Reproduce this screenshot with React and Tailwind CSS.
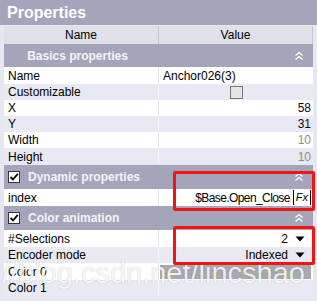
import React from "react";

const Chev = () => (
  <svg width="10" height="10" viewBox="0 0 10 10" className="block">
    <path d="M1.5 4.5 L5 1.5 L8.5 4.5 M1.5 8.5 L5 5.5 L8.5 8.5" fill="none" stroke="#ffffff" strokeWidth="1.3" />
  </svg>
);

const Tri = () => (
  <svg width="10" height="6" viewBox="0 0 10 6" className="block">
    <path d="M0.5 0.5 L9.5 0.5 L5 5.5 Z" fill="#000" />
  </svg>
);

const CheckBox = () => (
  <div className="w-[12px] h-[12px] bg-white border border-[#333] flex items-center justify-center">
    <svg width="10" height="10" viewBox="0 0 10 10" className="block">
      <path d="M1.5 5 L4 7.5 L8.8 1.8" fill="none" stroke="#000" strokeWidth="1.8" />
    </svg>
  </div>
);

function Section({ title, checkbox, h = "h-[24px]" }) {
  return (
    <div className={`flex items-center ${h} bg-[#a4a4ba]`}>
      {checkbox ? (
        <div className="flex items-center pl-[4px] gap-[8px] flex-1">
          <CheckBox />
          <span className="font-bold text-[12px] text-[#f4f4f8]">{title}</span>
        </div>
      ) : (
        <div className="w-[154px] text-center pr-[7px] font-bold text-[12px] text-[#f4f4f8]">{title}</div>
      )}
      <div className="ml-auto mr-[9px]">
        <Chev />
      </div>
    </div>
  );
}

function Row({ name, white, h = "h-[16px]", children, right }) {
  const bg = white ? "bg-white" : "bg-[#e8e9f2]";
  return (
    <div className={`flex ${h}`}>
      <div className={`w-[154px] ${bg} flex items-center pl-[4px] text-[12px] text-black`}>{name}</div>
      <div className={`w-[1px] ${white ? "bg-[#e4e5ee]" : "bg-[#f4f4f9]"}`}></div>
      <div className={`flex-1 ${bg} flex items-center ${right ? "justify-end pr-[2px]" : "pl-[4px]"} text-[12px]`}>
        {children}
      </div>
    </div>
  );
}

export default function App() {
  return (
    <div
      className="relative w-[317px] h-[301px] overflow-hidden bg-[#e6e7f0]"
      style={{ fontFamily: '"Liberation Sans", Arial, sans-serif' }}
    >
      <div className="h-[25px] bg-[#a4a4ba] flex items-center pl-[7px]">
        <span className="text-white font-bold text-[16px] leading-none">Properties</span>
      </div>
      <div className="h-[1px]"></div>
      <div className="pl-[4px] pr-[4px]">
        <div className="flex h-[18px] bg-[#dfe0e8] text-[12px] text-black">
          <div className="w-[154px] flex items-center justify-center">Name</div>
          <div className="w-[1px] bg-[#c4c5d2]"></div>
          <div className="flex-1 flex items-center justify-center">Value</div>
          <div className="w-[1px] bg-[#c4c5d2]"></div>
        </div>
        <Section title="Basics properties" h="h-[23px]" />
        <Row name="Name" white h="h-[17px]">
          <span className="text-black">Anchor026(3)</span>
        </Row>
        <Row name="Customizable">
          <div className="flex-1 flex justify-center pr-[4px]">
            <div className="w-[13px] h-[13px] bg-[#e4e4e8] border border-[#777]"></div>
          </div>
        </Row>
        <Row name="X" white right>
          <span className="text-[#0a0a20]">58</span>
        </Row>
        <Row name="Y" right>
          <span className="text-[#0a0a20]">31</span>
        </Row>
        <Row name="Width" white right>
          <span className="text-[#8e8e8e]">10</span>
        </Row>
        <Row name="Height" h="h-[17px]" right>
          <span className="text-[#8e8e8e]">10</span>
        </Row>
        <Section title="Dynamic properties" checkbox />
        <Row name="index" white h="h-[17px]" right>
          <span className="text-black tracking-[-0.6px]">$Base.Open_Close</span>
          <span className="ml-[3px] h-[15px] border-l border-r border-black px-[2px] flex items-center text-[11px] italic">
            Fx
          </span>
        </Row>
        <Section title="Color animation" checkbox />
        <Row name="#Selections" white h="h-[17px]" right>
          <span className="text-black">2</span>
          <span className="ml-[7px] mr-[6px]"><Tri /></span>
        </Row>
        <Row name="Encoder mode" right>
          <span className="text-black">Indexed</span>
          <span className="ml-[7px] mr-[6px]"><Tri /></span>
        </Row>
        <Row name="Color 0" white h="h-[17px]">
          <div className="w-[151px] h-[14px] -ml-[3px] bg-[#a9a9ac]"></div>
        </Row>
        <Row name="Color 1"></Row>
      </div>

      <div
        className="absolute right-[12px] top-[259px] text-[29px] leading-[29px] whitespace-nowrap text-[rgba(255,255,255,0.88)] [text-shadow:0_0_1px_rgba(0,0,0,0.28)]"
        style={{ fontFamily: '"Liberation Sans", Arial, sans-serif' }}
      >
        https://blog.csdn.net/lincshao
      </div>

      <div className="absolute left-[173px] top-[171px] w-[142px] h-[40px] border-[3px] border-[#f01414] rounded-[2px]"></div>
      <div className="absolute left-[173px] top-[226px] w-[142px] h-[39px] border-[3px] border-[#f01414] rounded-[2px]"></div>
    </div>
  );
}
